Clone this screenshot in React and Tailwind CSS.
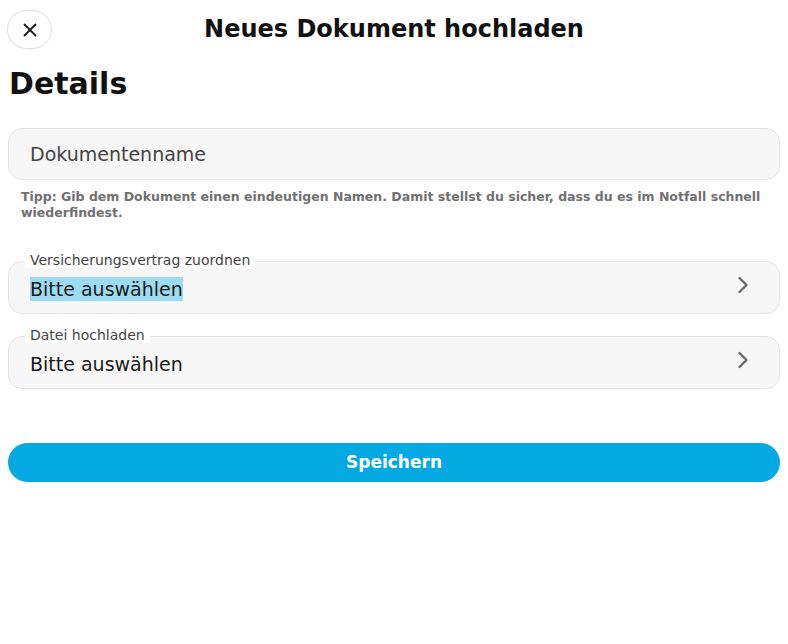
import { X, ChevronRight } from "lucide-react";

function SelectField({ label, value, highlight }) {
    return (
        <div className="relative">
            {/* LABEL ON BORDER */}
            <span className="absolute left-[17px] -top-[9px] px-[5px] bg-white text-[14px] leading-[16px] text-[#444]">
                {label}
            </span>
            <button className="w-full h-[53px] flex items-center justify-between pl-[21px] pr-[22px] bg-[#f7f7f7] border border-[#e4e4e4] rounded-[14px] text-left">
                <span className="text-[19px] leading-[23px] text-[#1a1a1a] pt-[3px]">
                    <span className={highlight ? "bg-[#9cdcf2] py-[1px]" : ""}>{value}</span>
                </span>
                <ChevronRight size={28} strokeWidth={2} className="text-[#6b6b6b] -mt-[6px]" />
            </button>
        </div>
    );
}

export default function App() {
    return (
        <div className="w-[788px] h-[644px] bg-white font-['DejaVu_Sans',sans-serif] px-[8px] pt-[10px]">

            {/* HEADER */}
            <div className="relative h-[38px] flex items-center justify-center">
                <button className="absolute left-[-1px] top-0 w-[45px] h-[39px] rounded-full border border-[#dedede] bg-white flex items-center justify-center">
                    <X size={22} strokeWidth={2} className="text-[#1a1a1a]" />
                </button>
                <h1 className="text-[24px] font-bold text-[#111] leading-none">
                    Neues Dokument hochladen
                </h1>
            </div>

            {/* TITLE */}
            <h2 className="text-[30px] font-bold text-[#111] leading-none mt-[21px] ml-[1px]">
                Details
            </h2>

            {/* NAME INPUT */}
            <div className="mt-[29px] h-[52px] flex items-center px-[21px] bg-[#f7f7f7] border border-[#e4e4e4] rounded-[14px]">
                <span className="text-[19px] text-[#444]">Dokumentenname</span>
            </div>

            <p className="mt-[9px] pl-[13px] pr-[10px] text-[12.5px] leading-[16px] font-bold text-[#707070]">
                Tipp: Gib dem Dokument einen eindeutigen Namen. Damit stellst du sicher, dass du es im Notfall schnell wiederfindest.
            </p>

            {/* SELECTS */}
            <div className="mt-[40px] flex flex-col gap-[22px]">
                <SelectField label="Versicherungsvertrag zuordnen" value="Bitte auswählen" highlight />
                <SelectField label="Datei hochladen" value="Bitte auswählen" />
            </div>

            {/* SAVE */}
            <button className="mt-[54px] w-full h-[39px] rounded-full bg-[#05a9e1] text-white text-[17px] font-bold">
                Speichern
            </button>

        </div>
    );
}
